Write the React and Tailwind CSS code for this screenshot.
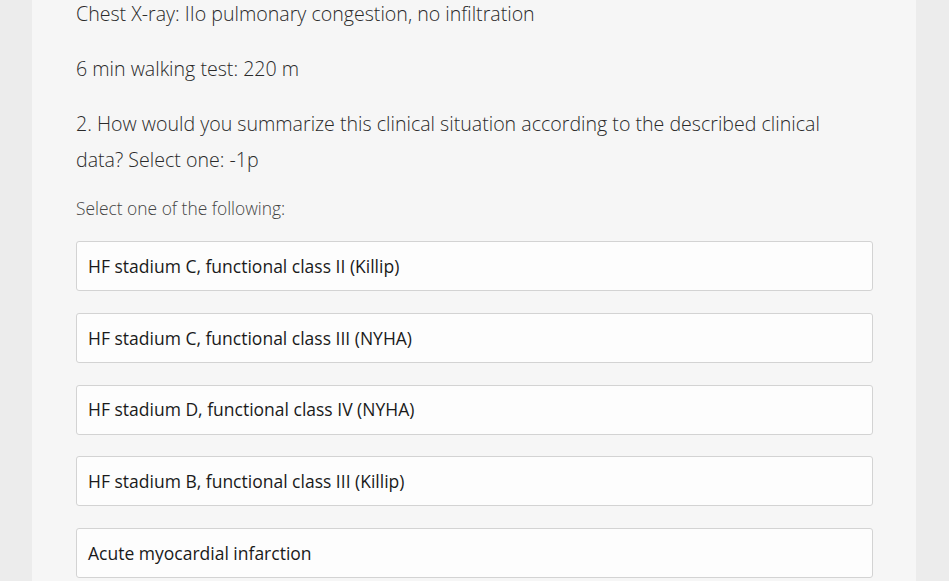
export default function App() {
  const options = [
    "HF stadium C, functional class II (Killip)",
    "HF stadium C, functional class III (NYHA)",
    "HF stadium D, functional class IV (NYHA)",
    "HF stadium B, functional class III (Killip)",
    "Acute myocardial infarction",
  ];
  return (
    <div className="h-[581px] overflow-hidden bg-[#ececec] pl-[32px] pr-[33px]" style={{ fontFamily: '"Open Sans", sans-serif' }}>
      <div className="h-full flex flex-col bg-[#f6f6f6] px-[44px]">
        <p className="-mt-[4px] text-[19.6px] leading-[36px] text-[#2a2a2a] font-light">Chest X-ray: IIo pulmonary congestion, no infiltration</p>
        <p className="mt-[19px] text-[19.6px] leading-[36px] text-[#2a2a2a] font-light">6 min walking test: 220 m</p>
        <p className="mt-[19px] text-[19.6px] leading-[36px] text-[#2a2a2a] font-light">2. How would you summarize this clinical situation according to the described clinical data? Select one: -1p</p>
        <p className="mt-[12px] text-[17.4px] leading-[36px] text-[#444] font-light">Select one of the following:</p>
        <div className="mt-[15px] flex flex-col gap-[21.75px] w-[797px] shrink-0">
          {options.map((o) => (
            <div key={o} className="h-[50px] shrink-0 flex items-center px-[11px] bg-[#fdfdfd] border border-[#d3d3d3] rounded-[3px] text-[17.5px] text-[#1a1a1a]">
              {o}
            </div>
          ))}
        </div>
      </div>
    </div>
  );
}
